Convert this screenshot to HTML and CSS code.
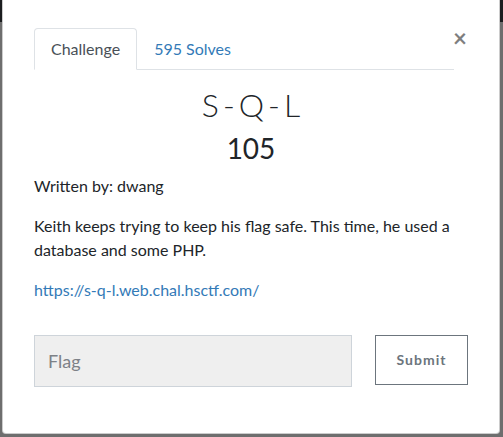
FILE: index.html
```html
<!DOCTYPE html>
<html lang="en">
<head>
<meta charset="utf-8">
<title>S-Q-L</title>
<link rel="stylesheet" href="styles.css">
</head>
<body class="page">
<div class="backdrop">
  <div class="modal">
    <button class="close" type="button" aria-label="Close">×</button>
    <div class="modal-body">
      <ul class="nav-tabs">
        <li class="nav-item"><a class="nav-link active">Challenge</a></li>
        <li class="nav-item"><a class="nav-link">595 Solves</a></li>
      </ul>
      <h2 class="challenge-name">S-Q-L</h2>
      <h3 class="challenge-value">105</h3>
      <p class="author">Written by: dwang</p>
      <p class="desc">Keith keeps trying to keep his flag safe. This time, he used a database and some PHP.</p>
      <p class="desc"><a class="link" href="#">https://s-q-l.web.chal.hsctf.com/</a></p>
      <div class="submit-row">
        <input class="flag-input" type="text" placeholder="Flag">
        <button class="submit-btn" type="button">Submit</button>
      </div>
    </div>
  </div>
</div>
</body>
</html>
```
FILE: styles.css
```css
* { box-sizing: border-box; }
.page {
  margin: 0;
  font-family: Lato, "Open Sans", sans-serif;
  font-size: 16px;
  line-height: 1.5;
  color: #212529;
  overflow: hidden;
}
.backdrop {
  height: 437px;
  background: linear-gradient(#1b1d1f 0, #1b1d1f 22px, #6e6e6e 22px, #6e6e6e 100%);
  padding-left: 2px;
}
.modal {
  position: relative;
  width: 498px;
  height: 434px;
  background: #fff;
  border: 1px solid rgba(0, 0, 0, 0.2);
  border-top: none;
  border-radius: 0 0 4px 4px;
}
.close {
  position: absolute;
  top: 26px;
  right: 32px;
  padding: 0;
  border: 0;
  background: transparent;
  font-family: Lato, sans-serif;
  font-size: 24px;
  font-weight: 700;
  line-height: 1;
  color: #000;
  opacity: 0.5;
  text-shadow: 0 1px 0 #fff;
  cursor: pointer;
}
.modal-body {
  padding: 28px 31px 0 31px;
}
.nav-tabs {
  display: flex;
  list-style: none;
  margin: 0 14px 0 0;
  padding: 0;
  border-bottom: 1px solid #dee2e6;
}
.nav-item { margin-bottom: -1px; }
.nav-link {
  display: block;
  padding: 8px 16px;
  border: 1px solid transparent;
  border-radius: 4px 4px 0 0;
  color: #337ab7;
  text-decoration: none;
}
.nav-link.active {
  color: #495057;
  background: #fff;
  border-color: #dee2e6 #dee2e6 #fff;
}
.challenge-name {
  margin: 0 0 8px;
  padding-top: 16px;
  padding-left: 4px;
  font-size: 32px;
  font-weight: 300;
  line-height: 1.2;
  letter-spacing: 4px;
  text-align: center;
}
.challenge-value {
  margin: 0 0 8px;
  font-size: 28px;
  font-weight: 400;
  line-height: 1.2;
  text-align: center;
}
.author, .desc {
  margin: 0 0 16px;
}
.link {
  color: #337ab7;
  text-decoration: none;
}
.submit-row {
  display: flex;
  align-items: flex-start;
  gap: 23px;
  margin-top: 33px;
}
.flag-input {
  width: 318px;
  height: 52px;
  padding: 0 13px;
  background: #efefef;
  border: 1px solid #ced4da;
  border-radius: 0;
  font-family: Lato, sans-serif;
  font-size: 18px;
  color: #495057;
}
.flag-input::placeholder { color: #7d8187; }
.submit-btn {
  width: 93px;
  height: 50px;
  padding: 0;
  background: #fff;
  border: 1px solid #6c757d;
  border-radius: 0;
  font-family: Lato, sans-serif;
  font-size: 14px;
  font-weight: 700;
  letter-spacing: 1px;
  color: #6c757d;
}
```
